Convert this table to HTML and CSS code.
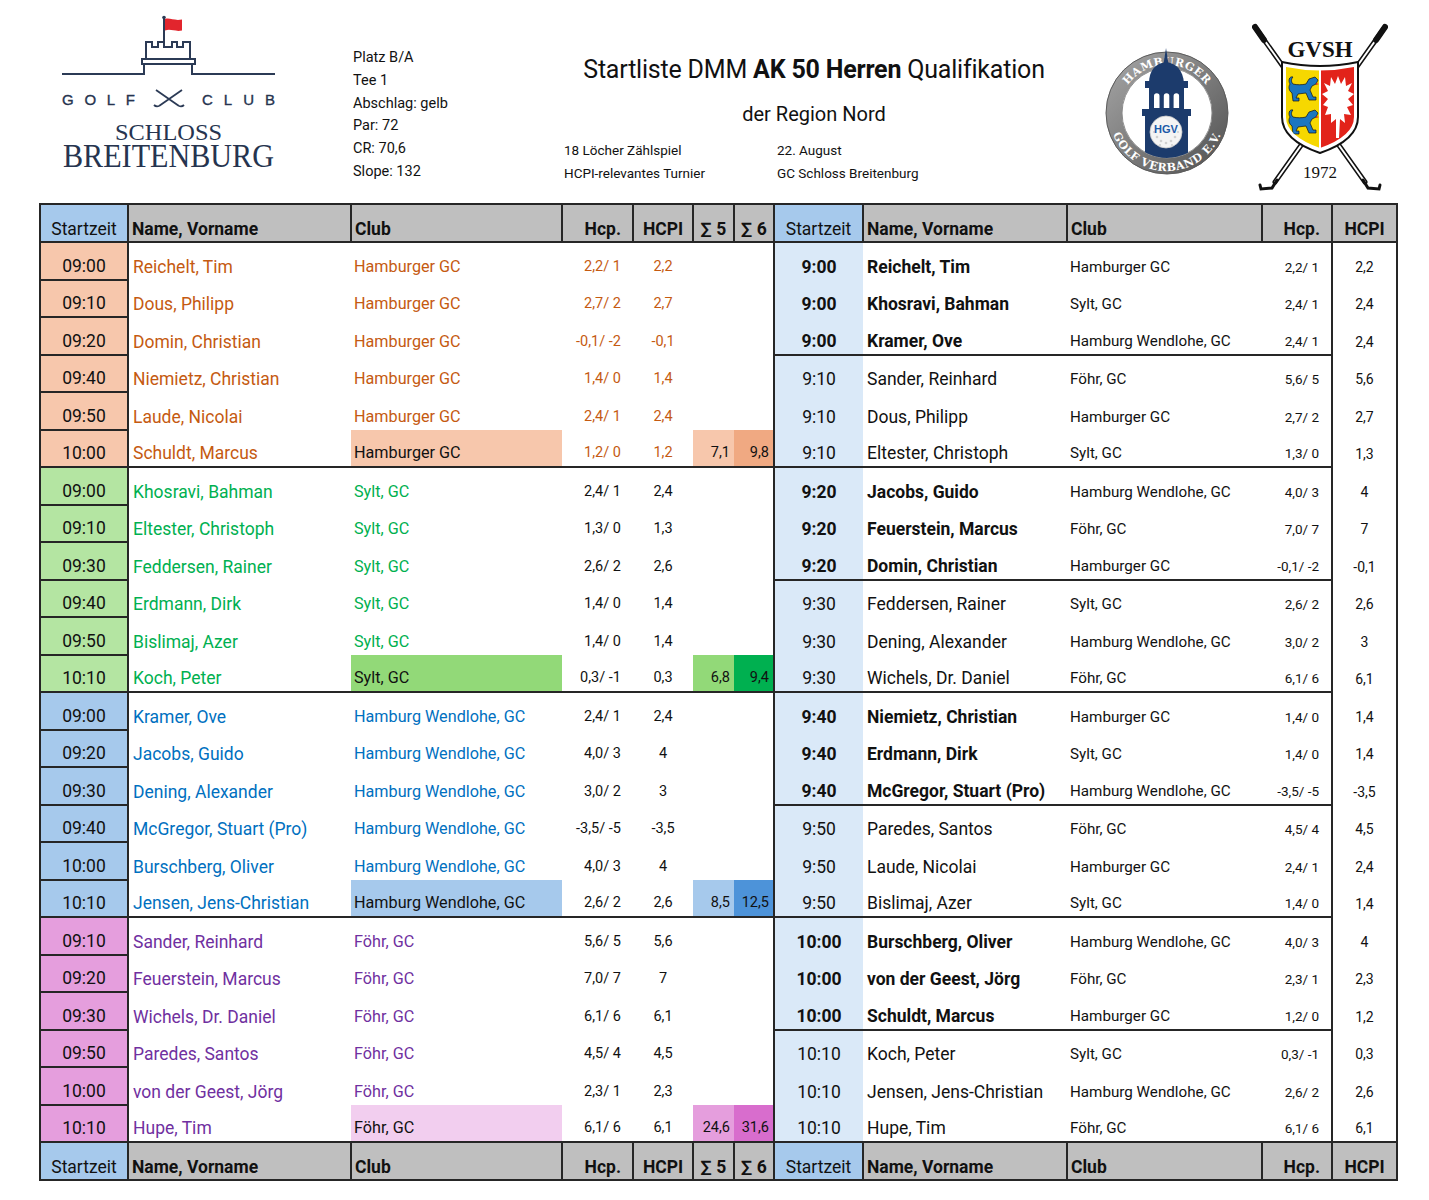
FILE: index.html
```html
<!DOCTYPE html>
<html lang="de">
<head>
<meta charset="utf-8">
<title>Startliste DMM AK 50 Herren Qualifikation</title>
<link rel="stylesheet" href="styles.css">
</head>
<body>
<div class="page">
  <header class="hdr">
    <div class="logo">
      <svg width="218" height="166" viewBox="0 0 218 166">
        <g fill="none" stroke="#2b3a55" stroke-width="2">
          <line x1="104" y1="4" x2="104" y2="28"/>
          <path d="M86,46 L86,28 L92,28 L92,33 L98,33 L98,28 L104,28 L104,33 L112,33 L112,28 L117,28 L117,33 L123,33 L123,28 L130,28 L130,46"/>
          <rect x="82" y="45" width="53" height="5"/>
          <path d="M2,60 L84,60 L84,50 M132,50 L132,60 L215,60"/>
          <path d="M96,76 L119,92 M122,76 L99,92" stroke-width="1.8"/>
          <path d="M119,92 q3,1 5,-1 M99,92 q-3,1 -5,-1" stroke-width="1.8"/>
        </g>
        <circle cx="104" cy="3.5" r="1.8" fill="#2b3a55"/>
        <path d="M105,5 C110,3.5 114,7 122,5.5 L122,16.5 C115,18 111,14.5 105,16.5 Z" fill="#e2252d"/>
        <text class="lg-sans" x="2" y="91" textLength="73" lengthAdjust="spacing">GOLF</text>
        <text class="lg-sans" x="142" y="91" textLength="73" lengthAdjust="spacing">CLUB</text>
        <text class="lg-serif1" x="55" y="126" textLength="107" lengthAdjust="spacingAndGlyphs">SCHLOSS</text>
        <text class="lg-serif2" x="3" y="153" textLength="211" lengthAdjust="spacingAndGlyphs" transform="translate(0,153) scale(1,1.14) translate(0,-153)">BREITENBURG</text>
      </svg>
    </div>
    <div class="info">
      <p>Platz B/A</p>
      <p>Tee 1</p>
      <p>Abschlag: gelb</p>
      <p>Par: 72</p>
      <p>CR: 70,6</p>
      <p>Slope: 132</p>
    </div>
    <div class="mid">
      <h1 class="title">Startliste DMM <b>AK 50 Herren</b> Qualifikation</h1>
      <h2 class="sub">der Region Nord</h2>
      <div class="facts">
        <div class="fcol"><p>18 Löcher Zählspiel</p><p>HCPI-relevantes Turnier</p></div>
        <div class="fcol"><p>22. August</p><p>GC Schloss Breitenburg</p></div>
      </div>
    </div>
    <div class="hgv">
      <svg width="126" height="130" viewBox="0 -4 126 130">
        <defs>
          <linearGradient id="ring" x1="0" y1="0" x2="1" y2="1">
            <stop offset="0" stop-color="#a2a2a2"/>
            <stop offset="0.5" stop-color="#7d7d7d"/>
            <stop offset="1" stop-color="#555"/>
          </linearGradient>
          <path id="arcTop" d="M15,63 A48,48 0 0 1 111,63"/>
          <path id="arcBot" d="M5,63 A58,58 0 0 0 121,63"/>
          <clipPath id="inner"><circle cx="63" cy="63" r="45"/></clipPath>
        </defs>
        <circle cx="63" cy="63" r="53" fill="none" stroke="url(#ring)" stroke-width="16"/>
        <circle cx="63" cy="63" r="61" fill="none" stroke="#5c5c5c" stroke-width="1"/>
        <circle cx="63" cy="63" r="45" fill="#fff" stroke="#8a8a8a" stroke-width="1"/>
        <text class="arc"><textPath href="#arcTop" startOffset="50%" text-anchor="middle">HAMBURGER</textPath></text>
        <text class="arc"><textPath href="#arcBot" startOffset="50%" text-anchor="middle">GOLF VERBAND E.V.</textPath></text>
        <g fill="#1c3b6c">
          <path d="M62,-2 L64.5,14 L59.5,14 Z"/>
          <path d="M45,33 C45,20 52,13 62,12 C72,13 79,20 80,33 Z"/>
          <rect x="41" y="31" width="43" height="7"/>
          <path d="M45,38 H80 V61 H45 Z M50,58 H55.5 V46 A2.75,2.75 0 0 0 50,46 Z M59.8,58 H65.3 V46 A2.75,2.75 0 0 0 59.8,46 Z M69.6,58 H75.1 V46 A2.75,2.75 0 0 0 69.6,46 Z" fill-rule="evenodd"/>
          <rect x="38" y="59" width="49" height="7"/>
          <g clip-path="url(#inner)"><rect x="41" y="66" width="43" height="50"/></g>
        </g>
        <circle cx="62" cy="82" r="16" fill="#f4f4f4" stroke="#c9c9c9" stroke-width="0.8"/>
        <g fill="#d0d0d0">
          <circle cx="53" cy="87" r="1.3"/><circle cx="57" cy="91" r="1.3"/><circle cx="62" cy="93" r="1.3"/>
          <circle cx="67" cy="91" r="1.3"/><circle cx="71" cy="87" r="1.3"/><circle cx="56" cy="95" r="1.1"/>
          <circle cx="68" cy="95" r="1.1"/><circle cx="50" cy="82" r="1.1"/><circle cx="74" cy="82" r="1.1"/>
        </g>
        <text class="hgvtxt" x="62" y="83" text-anchor="middle">HGV</text>
      </svg>
    </div>
    <div class="gvsh">
      <svg width="136" height="172" viewBox="0 0 136 172">
        <g stroke-linecap="round" fill="none">
          <line x1="3" y1="5" x2="113" y2="160" stroke="#111" stroke-width="5"/>
          <line x1="3" y1="5" x2="113" y2="160" stroke="#fff" stroke-width="2"/>
          <line x1="133" y1="5" x2="23" y2="160" stroke="#111" stroke-width="5"/>
          <line x1="133" y1="5" x2="23" y2="160" stroke="#fff" stroke-width="2"/>
          <line x1="3" y1="5" x2="12" y2="18" stroke="#111" stroke-width="6"/>
          <line x1="133" y1="5" x2="124" y2="18" stroke="#111" stroke-width="6"/>
          <path d="M111,158 L116,166 L127,167 L128,163" stroke="#111" stroke-width="3"/>
          <path d="M25,158 L20,166 L9,167 L8,163" stroke="#111" stroke-width="3"/>
        </g>
        <path d="M30,40 Q68,48 106,40 L106,95 Q106,118 68,131 Q30,118 30,95 Z" fill="#fff" stroke="#111" stroke-width="2"/>
        <clipPath id="shin"><path d="M34,45 Q68,52 102,45 L102,95 Q102,114 68,126 Q34,114 34,95 Z"/></clipPath>
        <g clip-path="url(#shin)">
          <rect x="30" y="40" width="37" height="92" fill="#f6d800"/>
          <rect x="69" y="40" width="37" height="92" fill="#e2231a"/>
          <path d="M86,54 L89,62 L93,55 L94,64 L100,61 L96,69 L102,72 L96,77 L101,83 L95,85 L99,93 L92,92 L93,101 L88,97 L87,116 L84,116 L84,97 L79,101 L79,92 L73,93 L76,85 L71,83 L76,77 L70,72 L76,69 L72,61 L78,64 L79,55 L83,62 Z" fill="#fff"/>
          <g fill="#1b76c0" stroke="#111" stroke-width="0.7" stroke-linejoin="round">
            <path d="M57,57 L63,55 L66,58 L64,62 L60,64 L58,68 L61,75 L64,75 L64,78 L57,78 L54,71 L46,72 L44,76 L47,76 L47,79 L41,79 L40,71 C37,69 36,65 38,62 C36,59 37,54 41,55 C39,57 39,60 41,62 C45,63 50,63 54,62 Z"/>
            <path d="M57,90 L63,88 L66,91 L64,95 L60,97 L58,101 L61,108 L64,108 L64,111 L57,111 L54,104 L46,105 L44,109 L47,109 L47,112 L41,112 L40,104 C37,102 36,98 38,95 C36,92 37,87 41,88 C39,90 39,93 41,95 C45,96 50,96 54,95 Z"/>
          </g>
          <g fill="#e2231a"><path d="M64,61 l3,1 l-3,1 Z M64,94 l3,1 l-3,1 Z"/></g>
        </g>
        <text class="gv-t" x="68" y="35" text-anchor="middle">GVSH</text>
        <text class="gv-y" x="68" y="156" text-anchor="middle">1972</text>
      </svg>
    </div>
  </header>

  <table class="list">
    <colgroup>
      <col style="width:88px"><col style="width:223px"><col style="width:211px"><col style="width:71px"><col style="width:60px"><col style="width:41px"><col style="width:40px">
      <col style="width:89px"><col style="width:204px"><col style="width:195px"><col style="width:70px"><col style="width:65px">
    </colgroup>
    <thead>
      <tr class="hd">
        <th class="hs">Startzeit</th><th class="hn">Name, Vorname</th><th class="hn">Club</th><th class="hh">Hcp.</th><th class="hc">HCPI</th><th class="hc">∑ 5</th><th class="hc">∑ 6</th>
        <th class="hs">Startzeit</th><th class="hn">Name, Vorname</th><th class="hn">Club</th><th class="hh">Hcp.</th><th class="hc">HCPI</th>
      </tr>
    </thead>
    <tbody>
      <tr class="or b"><td class="ls">09:00</td><td class="ln">Reichelt, Tim</td><td class="lc">Hamburger GC</td><td class="lh">2,2/ 1</td><td class="li">2,2</td><td class="s5"></td><td class="s6"></td><td class="rs">9:00</td><td class="rn">Reichelt, Tim</td><td class="rc">Hamburger GC</td><td class="rh">2,2/ 1</td><td class="ri">2,2</td></tr>
      <tr class="or b"><td class="ls">09:10</td><td class="ln">Dous, Philipp</td><td class="lc">Hamburger GC</td><td class="lh">2,7/ 2</td><td class="li">2,7</td><td class="s5"></td><td class="s6"></td><td class="rs">9:00</td><td class="rn">Khosravi, Bahman</td><td class="rc">Sylt, GC</td><td class="rh">2,4/ 1</td><td class="ri">2,4</td></tr>
      <tr class="or b er"><td class="ls">09:20</td><td class="ln">Domin, Christian</td><td class="lc">Hamburger GC</td><td class="lh">-0,1/ -2</td><td class="li">-0,1</td><td class="s5"></td><td class="s6"></td><td class="rs">9:00</td><td class="rn">Kramer, Ove</td><td class="rc">Hamburg Wendlohe, GC</td><td class="rh">2,4/ 1</td><td class="ri">2,4</td></tr>
      <tr class="or"><td class="ls">09:40</td><td class="ln">Niemietz, Christian</td><td class="lc">Hamburger GC</td><td class="lh">1,4/ 0</td><td class="li">1,4</td><td class="s5"></td><td class="s6"></td><td class="rs">9:10</td><td class="rn">Sander, Reinhard</td><td class="rc">Föhr, GC</td><td class="rh">5,6/ 5</td><td class="ri">5,6</td></tr>
      <tr class="or"><td class="ls">09:50</td><td class="ln">Laude, Nicolai</td><td class="lc">Hamburger GC</td><td class="lh">2,4/ 1</td><td class="li">2,4</td><td class="s5"></td><td class="s6"></td><td class="rs">9:10</td><td class="rn">Dous, Philipp</td><td class="rc">Hamburger GC</td><td class="rh">2,7/ 2</td><td class="ri">2,7</td></tr>
      <tr class="or el er"><td class="ls">10:00</td><td class="ln">Schuldt, Marcus</td><td class="lc hl">Hamburger GC</td><td class="lh">1,2/ 0</td><td class="li">1,2</td><td class="s5 f">7,1</td><td class="s6 f">9,8</td><td class="rs">9:10</td><td class="rn">Eltester, Christoph</td><td class="rc">Sylt, GC</td><td class="rh">1,3/ 0</td><td class="ri">1,3</td></tr>

      <tr class="gr b"><td class="ls">09:00</td><td class="ln">Khosravi, Bahman</td><td class="lc">Sylt, GC</td><td class="lh">2,4/ 1</td><td class="li">2,4</td><td class="s5"></td><td class="s6"></td><td class="rs">9:20</td><td class="rn">Jacobs, Guido</td><td class="rc">Hamburg Wendlohe, GC</td><td class="rh">4,0/ 3</td><td class="ri">4</td></tr>
      <tr class="gr b"><td class="ls">09:10</td><td class="ln">Eltester, Christoph</td><td class="lc">Sylt, GC</td><td class="lh">1,3/ 0</td><td class="li">1,3</td><td class="s5"></td><td class="s6"></td><td class="rs">9:20</td><td class="rn">Feuerstein, Marcus</td><td class="rc">Föhr, GC</td><td class="rh">7,0/ 7</td><td class="ri">7</td></tr>
      <tr class="gr b er"><td class="ls">09:30</td><td class="ln">Feddersen, Rainer</td><td class="lc">Sylt, GC</td><td class="lh">2,6/ 2</td><td class="li">2,6</td><td class="s5"></td><td class="s6"></td><td class="rs">9:20</td><td class="rn">Domin, Christian</td><td class="rc">Hamburger GC</td><td class="rh">-0,1/ -2</td><td class="ri">-0,1</td></tr>
      <tr class="gr"><td class="ls">09:40</td><td class="ln">Erdmann, Dirk</td><td class="lc">Sylt, GC</td><td class="lh">1,4/ 0</td><td class="li">1,4</td><td class="s5"></td><td class="s6"></td><td class="rs">9:30</td><td class="rn">Feddersen, Rainer</td><td class="rc">Sylt, GC</td><td class="rh">2,6/ 2</td><td class="ri">2,6</td></tr>
      <tr class="gr"><td class="ls">09:50</td><td class="ln">Bislimaj, Azer</td><td class="lc">Sylt, GC</td><td class="lh">1,4/ 0</td><td class="li">1,4</td><td class="s5"></td><td class="s6"></td><td class="rs">9:30</td><td class="rn">Dening, Alexander</td><td class="rc">Hamburg Wendlohe, GC</td><td class="rh">3,0/ 2</td><td class="ri">3</td></tr>
      <tr class="gr el er"><td class="ls">10:10</td><td class="ln">Koch, Peter</td><td class="lc hl">Sylt, GC</td><td class="lh">0,3/ -1</td><td class="li">0,3</td><td class="s5 f">6,8</td><td class="s6 f">9,4</td><td class="rs">9:30</td><td class="rn">Wichels, Dr. Daniel</td><td class="rc">Föhr, GC</td><td class="rh">6,1/ 6</td><td class="ri">6,1</td></tr>

      <tr class="bl b"><td class="ls">09:00</td><td class="ln">Kramer, Ove</td><td class="lc">Hamburg Wendlohe, GC</td><td class="lh">2,4/ 1</td><td class="li">2,4</td><td class="s5"></td><td class="s6"></td><td class="rs">9:40</td><td class="rn">Niemietz, Christian</td><td class="rc">Hamburger GC</td><td class="rh">1,4/ 0</td><td class="ri">1,4</td></tr>
      <tr class="bl b"><td class="ls">09:20</td><td class="ln">Jacobs, Guido</td><td class="lc">Hamburg Wendlohe, GC</td><td class="lh">4,0/ 3</td><td class="li">4</td><td class="s5"></td><td class="s6"></td><td class="rs">9:40</td><td class="rn">Erdmann, Dirk</td><td class="rc">Sylt, GC</td><td class="rh">1,4/ 0</td><td class="ri">1,4</td></tr>
      <tr class="bl b er"><td class="ls">09:30</td><td class="ln">Dening, Alexander</td><td class="lc">Hamburg Wendlohe, GC</td><td class="lh">3,0/ 2</td><td class="li">3</td><td class="s5"></td><td class="s6"></td><td class="rs">9:40</td><td class="rn">McGregor, Stuart (Pro)</td><td class="rc">Hamburg Wendlohe, GC</td><td class="rh">-3,5/ -5</td><td class="ri">-3,5</td></tr>
      <tr class="bl"><td class="ls">09:40</td><td class="ln">McGregor, Stuart (Pro)</td><td class="lc">Hamburg Wendlohe, GC</td><td class="lh">-3,5/ -5</td><td class="li">-3,5</td><td class="s5"></td><td class="s6"></td><td class="rs">9:50</td><td class="rn">Paredes, Santos</td><td class="rc">Föhr, GC</td><td class="rh">4,5/ 4</td><td class="ri">4,5</td></tr>
      <tr class="bl"><td class="ls">10:00</td><td class="ln">Burschberg, Oliver</td><td class="lc">Hamburg Wendlohe, GC</td><td class="lh">4,0/ 3</td><td class="li">4</td><td class="s5"></td><td class="s6"></td><td class="rs">9:50</td><td class="rn">Laude, Nicolai</td><td class="rc">Hamburger GC</td><td class="rh">2,4/ 1</td><td class="ri">2,4</td></tr>
      <tr class="bl el er"><td class="ls">10:10</td><td class="ln">Jensen, Jens-Christian</td><td class="lc hl">Hamburg Wendlohe, GC</td><td class="lh">2,6/ 2</td><td class="li">2,6</td><td class="s5 f">8,5</td><td class="s6 f">12,5</td><td class="rs">9:50</td><td class="rn">Bislimaj, Azer</td><td class="rc">Sylt, GC</td><td class="rh">1,4/ 0</td><td class="ri">1,4</td></tr>

      <tr class="pu b"><td class="ls">09:10</td><td class="ln">Sander, Reinhard</td><td class="lc">Föhr, GC</td><td class="lh">5,6/ 5</td><td class="li">5,6</td><td class="s5"></td><td class="s6"></td><td class="rs">10:00</td><td class="rn">Burschberg, Oliver</td><td class="rc">Hamburg Wendlohe, GC</td><td class="rh">4,0/ 3</td><td class="ri">4</td></tr>
      <tr class="pu b"><td class="ls">09:20</td><td class="ln">Feuerstein, Marcus</td><td class="lc">Föhr, GC</td><td class="lh">7,0/ 7</td><td class="li">7</td><td class="s5"></td><td class="s6"></td><td class="rs">10:00</td><td class="rn">von der Geest, Jörg</td><td class="rc">Föhr, GC</td><td class="rh">2,3/ 1</td><td class="ri">2,3</td></tr>
      <tr class="pu b er"><td class="ls">09:30</td><td class="ln">Wichels, Dr. Daniel</td><td class="lc">Föhr, GC</td><td class="lh">6,1/ 6</td><td class="li">6,1</td><td class="s5"></td><td class="s6"></td><td class="rs">10:00</td><td class="rn">Schuldt, Marcus</td><td class="rc">Hamburger GC</td><td class="rh">1,2/ 0</td><td class="ri">1,2</td></tr>
      <tr class="pu"><td class="ls">09:50</td><td class="ln">Paredes, Santos</td><td class="lc">Föhr, GC</td><td class="lh">4,5/ 4</td><td class="li">4,5</td><td class="s5"></td><td class="s6"></td><td class="rs">10:10</td><td class="rn">Koch, Peter</td><td class="rc">Sylt, GC</td><td class="rh">0,3/ -1</td><td class="ri">0,3</td></tr>
      <tr class="pu"><td class="ls">10:00</td><td class="ln">von der Geest, Jörg</td><td class="lc">Föhr, GC</td><td class="lh">2,3/ 1</td><td class="li">2,3</td><td class="s5"></td><td class="s6"></td><td class="rs">10:10</td><td class="rn">Jensen, Jens-Christian</td><td class="rc">Hamburg Wendlohe, GC</td><td class="rh">2,6/ 2</td><td class="ri">2,6</td></tr>
      <tr class="pu"><td class="ls">10:10</td><td class="ln">Hupe, Tim</td><td class="lc hl">Föhr, GC</td><td class="lh">6,1/ 6</td><td class="li">6,1</td><td class="s5 f">24,6</td><td class="s6 f">31,6</td><td class="rs">10:10</td><td class="rn">Hupe, Tim</td><td class="rc">Föhr, GC</td><td class="rh">6,1/ 6</td><td class="ri">6,1</td></tr>
    </tbody>
    <tfoot>
      <tr class="hd">
        <th class="hs">Startzeit</th><th class="hn">Name, Vorname</th><th class="hn">Club</th><th class="hh">Hcp.</th><th class="hc">HCPI</th><th class="hc">∑ 5</th><th class="hc">∑ 6</th>
        <th class="hs">Startzeit</th><th class="hn">Name, Vorname</th><th class="hn">Club</th><th class="hh">Hcp.</th><th class="hc">HCPI</th>
      </tr>
    </tfoot>
  </table>
</div>
</body>
</html>
```
FILE: styles.css
```css
* { box-sizing: border-box; }
html, body { margin: 0; padding: 0; background: #fff; }
body { font-family: Roboto, "Liberation Sans", sans-serif; color: #111; }
.page { width: 1429px; }

/* ---------- header ---------- */
.hdr { display: flex; align-items: flex-start; height: 203px; padding-left: 60px; overflow: hidden; }
.logo { width: 218px; margin-top: 14px; margin-right: 75px; }
.logo svg { display: block; }
.lg-sans { font-family: "Liberation Sans", sans-serif; font-size: 15px; fill: #26344f; stroke: #26344f; stroke-width: 0.35px; }
.lg-serif1 { font-family: "Liberation Serif", serif; font-size: 23px; fill: #26344f; }
.lg-serif2 { font-family: "Liberation Serif", serif; font-size: 30px; fill: #26344f; }

.info { width: 211px; margin-top: 47px; font-size: 14.5px; }
.info p { margin: 0; line-height: 22.8px; }

.mid { width: 500px; margin-top: 53px; }
.title { margin: 0; font-size: 25px; font-weight: 400; text-align: center; line-height: 34px; letter-spacing: -0.2px; }
.title b { font-weight: 700; }
.sub { margin: 14px 0 0; font-size: 20px; font-weight: 400; text-align: center; line-height: 26px; }
.facts { display: flex; margin-top: 12px; font-size: 13.5px; }
.fcol { width: 213px; }
.fcol p { margin: 0; line-height: 22.5px; }

.hgv { width: 126px; margin-left: 40px; margin-top: 46px; }
.hgv svg, .gvsh svg { display: block; }
.arc { font-family: "DejaVu Serif", serif; font-weight: 700; font-size: 11px; fill: #fff; letter-spacing: 0.6px; }
.hgvtxt { font-family: "Liberation Sans", sans-serif; font-size: 11px; font-weight: 700; fill: #1c5aa8; }
.gvsh { width: 136px; margin-left: 22px; margin-top: 22px; }
.gv-t { font-family: "Liberation Serif", serif; font-weight: 700; font-size: 23px; fill: #111; }
.gv-y { font-family: "Liberation Serif", serif; font-size: 17px; fill: #111; }

/* ---------- table ---------- */
.list {
  margin-left: 39px;
  width: 1357px;
  table-layout: fixed;
  border-collapse: collapse;
  border: 2px solid #262626;
}
.list th, .list td {
  padding: 0 4px 3px;
  vertical-align: bottom;
  white-space: nowrap;
  overflow: hidden;
  line-height: 20px;
}
.hd { height: 38px; }
.list th {
  background: #bfbfbf;
  border: 2px solid #262626;
  font-size: 17.5px;
  font-weight: 700;
  color: #111;
  padding-bottom: 2px;
}
.list th.hs { background: #a6c9ec; font-weight: 400; text-align: center; padding: 0 0 2px; }
.list th.hn { text-align: left; padding-left: 3px; }
.list th.hh { text-align: right; padding-right: 11px; }
.list th.hc { text-align: center; padding: 0 0 2px; }

tbody tr { height: 37.5px; }
.list td { font-size: 17.5px; }

.ls { text-align: center; border-right: 2px solid #262626; border-bottom: 2px solid #262626; }
.ln { padding-left: 4px; }
.lc { font-size: 16.2px !important; padding-left: 3px !important; }
.lh { text-align: right; font-size: 14.5px !important; padding-right: 12px !important; }
.li { text-align: center; font-size: 14.5px !important; }
.s5, .s6 { text-align: right; font-size: 14.5px !important; padding-right: 4px !important; }
.rs { text-align: center; background: #dae9f8; border-left: 2px solid #262626; }
.rn { padding-left: 4px; }
.rc { font-size: 15.2px !important; padding-left: 3px !important; }
.rh { text-align: right; font-size: 13.5px !important; padding-right: 12px !important; }
.ri { text-align: center; font-size: 14px !important; border-left: 2px solid #262626; }

tr.b .rs, tr.b .rn { font-weight: 700; }
tr.el td:nth-child(-n+7) { border-bottom: 2px solid #262626; }
tr.er td:nth-child(n+8):nth-child(-n+11) { border-bottom: 2px solid #262626; }

/* group colours */
tr.or .ls { background: #f7c7ac; }
tr.or .ln, tr.or .lc, tr.or .lh, tr.or .li { color: #c55a11; }
tr.or .hl { background: #f7c7ac; }
tr.or .s5.f { background: #f7c7ac; }
tr.or .s6.f { background: #f0a982; }

tr.gr .ls { background: #b4e5a2; }
tr.gr .ln, tr.gr .lc { color: #00b050; }
tr.gr .hl { background: #92d978; }
tr.gr .s5.f { background: #92d978; }
tr.gr .s6.f { background: #00b050; }

tr.bl .ls { background: #a6c9ec; }
tr.bl .ln, tr.bl .lc { color: #0070c0; }
tr.bl .hl { background: #a6c9ec; }
tr.bl .s5.f { background: #a6c9ec; }
tr.bl .s6.f { background: #4d93d9; }

tr.pu .ls { background: #e59edd; }
tr.pu .ln, tr.pu .lc { color: #7030a0; }
tr.pu .hl { background: #f2ceef; }
tr.pu .s5.f { background: #e59edd; }
tr.pu .s6.f { background: #d86dcd; }

.list td.hl { color: #111; }
```
